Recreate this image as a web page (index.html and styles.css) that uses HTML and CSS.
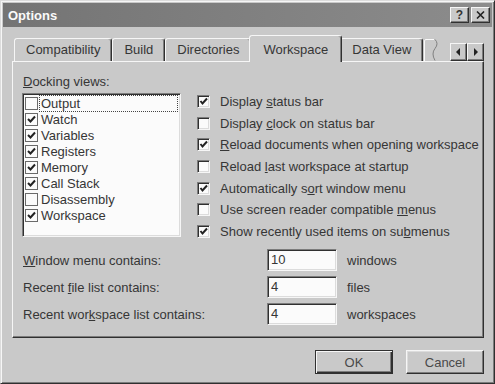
FILE: index.html
```html
<!DOCTYPE html>
<html lang="en">

<head>
  <meta charset="UTF-8">
  <title>Options</title>
  <link rel="stylesheet" href="styles.css">
</head>

<body>
  <div class="window">
    <div class="titlebar">
      <span class="title">Options</span>
      <div class="caption-btns">
        <span class="cap-btn help">?</span>
        <span class="cap-btn">
          <svg width="9" height="8" viewBox="0 0 9 8"><path d="M1 0.5 L8 7.5 M8 0.5 L1 7.5" stroke="#222" stroke-width="1.6"/></svg>
        </span>
      </div>
    </div>

    <div class="content">
      <div class="tabs">
        <div class="tab">Compatibility</div>
        <div class="tab">Build</div>
        <div class="tab">Directories</div>
        <div class="tab active">Workspace</div>
        <div class="tab">Data View</div>
        <svg class="tab-cut" width="18" height="23" viewBox="0 0 18 23">
          <path d="M1.5 23 V3 Q1.5 1.5 3 1.5 H11" stroke="#fafafa" stroke-width="1" fill="none"/>
          <path d="M12 1.5 q4 4 0 9 q-4 5 0 12" stroke="#808080" stroke-width="1" fill="none"/>
        </svg>
        <div class="tab-scroll">
          <span class="scroll-btn"><svg width="5" height="8" viewBox="0 0 5 8"><path d="M4 0 L0 4 L4 8 Z" fill="#222"/></svg></span>
          <span class="scroll-btn"><svg width="5" height="8" viewBox="0 0 5 8"><path d="M1 0 L5 4 L1 8 Z" fill="#222"/></svg></span>
        </div>
      </div>

      <div class="panel">
        <div class="top">
          <div class="docking">
            <div class="label"><u>D</u>ocking views:</div>
            <div class="listbox">
              <div class="item focus"><span class="lbox"></span><span class="item-text">Output</span></div>
              <div class="item"><span class="lbox checked"><svg width="11" height="11" viewBox="0 0 11 11"><polyline points="2,5 4.5,7.5 9,2.5" stroke="#222" stroke-width="2" fill="none"/></svg></span><span class="item-text">Watch</span></div>
              <div class="item"><span class="lbox checked"><svg width="11" height="11" viewBox="0 0 11 11"><polyline points="2,5 4.5,7.5 9,2.5" stroke="#222" stroke-width="2" fill="none"/></svg></span><span class="item-text">Variables</span></div>
              <div class="item"><span class="lbox checked"><svg width="11" height="11" viewBox="0 0 11 11"><polyline points="2,5 4.5,7.5 9,2.5" stroke="#222" stroke-width="2" fill="none"/></svg></span><span class="item-text">Registers</span></div>
              <div class="item"><span class="lbox checked"><svg width="11" height="11" viewBox="0 0 11 11"><polyline points="2,5 4.5,7.5 9,2.5" stroke="#222" stroke-width="2" fill="none"/></svg></span><span class="item-text">Memory</span></div>
              <div class="item"><span class="lbox checked"><svg width="11" height="11" viewBox="0 0 11 11"><polyline points="2,5 4.5,7.5 9,2.5" stroke="#222" stroke-width="2" fill="none"/></svg></span><span class="item-text">Call Stack</span></div>
              <div class="item"><span class="lbox"></span><span class="item-text">Disassembly</span></div>
              <div class="item"><span class="lbox checked"><svg width="11" height="11" viewBox="0 0 11 11"><polyline points="2,5 4.5,7.5 9,2.5" stroke="#222" stroke-width="2" fill="none"/></svg></span><span class="item-text">Workspace</span></div>
            </div>
          </div>

          <div class="options">
            <div class="option"><span class="check"><svg width="9" height="9" viewBox="0 0 9 9"><polyline points="1.5,4 3.5,6.5 8,1.5" stroke="#222" stroke-width="2" fill="none"/></svg></span><span>Display <u>s</u>tatus bar</span></div>
            <div class="option"><span class="check"></span><span>Display <u>c</u>lock on status bar</span></div>
            <div class="option"><span class="check"><svg width="9" height="9" viewBox="0 0 9 9"><polyline points="1.5,4 3.5,6.5 8,1.5" stroke="#222" stroke-width="2" fill="none"/></svg></span><span><u>R</u>eload documents when opening workspace</span></div>
            <div class="option"><span class="check"></span><span>Reload <u>l</u>ast workspace at startup</span></div>
            <div class="option"><span class="check"><svg width="9" height="9" viewBox="0 0 9 9"><polyline points="1.5,4 3.5,6.5 8,1.5" stroke="#222" stroke-width="2" fill="none"/></svg></span><span>Automatically s<u>o</u>rt window menu</span></div>
            <div class="option"><span class="check"></span><span>Use screen reader compatible <u>m</u>enus</span></div>
            <div class="option"><span class="check"><svg width="9" height="9" viewBox="0 0 9 9"><polyline points="1.5,4 3.5,6.5 8,1.5" stroke="#222" stroke-width="2" fill="none"/></svg></span><span>Show recently used items on su<u>b</u>menus</span></div>
          </div>
        </div>

        <div class="counts">
          <div class="count-row">
            <span class="count-label"><u>W</u>indow menu contains:</span>
            <span class="field">10</span>
            <span class="suffix">windows</span>
          </div>
          <div class="count-row">
            <span class="count-label">Recent <u>f</u>ile list contains:</span>
            <span class="field">4</span>
            <span class="suffix">files</span>
          </div>
          <div class="count-row">
            <span class="count-label">Recent wor<u>k</u>space list contains:</span>
            <span class="field">4</span>
            <span class="suffix">workspaces</span>
          </div>
        </div>
      </div>

      <div class="buttons">
        <button class="btn default">OK</button>
        <button class="btn">Cancel</button>
      </div>
    </div>
  </div>
</body>

</html>
```

FILE: styles.css
```css
body,
html {
  margin: 0;
  padding: 0;
  width: 100%;
  height: 100%;
  overflow: hidden;
  background-color: #c9c9c9;
  font-family: "Liberation Sans", Arial, sans-serif;
  font-size: 13px;
  color: #363636;
}

u {
  text-decoration-thickness: 1px;
  text-underline-offset: 1px;
}

.window {
  width: 495px;
  height: 384px;
  box-sizing: border-box;
  padding: 2px;
  background-color: #c9c9c9;
  border: 1px solid;
  border-color: #dcdcdc #303030 #303030 #dcdcdc;
  box-shadow: inset 1px 1px #f6f6f6, inset -1px -1px #7c7c7c;
}

/* caption */
.titlebar {
  height: 24px;
  display: flex;
  align-items: center;
  padding: 0 2px 0 5px;
  background: linear-gradient(90deg, #747474, #8c8c8c);
}

.title {
  color: #fafafa;
  font-weight: bold;
  font-size: 13px;
}

.caption-btns {
  margin-left: auto;
  display: flex;
  gap: 2px;
}

.cap-btn {
  width: 19px;
  height: 16px;
  box-sizing: border-box;
  display: flex;
  align-items: center;
  justify-content: center;
  background-color: #c9c9c9;
  border: 1px solid;
  border-color: #f6f6f6 #303030 #303030 #f6f6f6;
  box-shadow: inset -1px -1px #7c7c7c;
}

.cap-btn.help {
  font-weight: bold;
  font-size: 12px;
  color: #333;
}

.content {
  padding: 0 8px 0 9px;
}

/* tab strip */
.tabs {
  display: flex;
  align-items: flex-end;
  height: 26px;
  margin-top: 8px;
  padding-left: 2px;
}

.tab {
  height: 23px;
  box-sizing: border-box;
  padding: 0 11px;
  line-height: 21px;
  border: 1px solid;
  border-bottom: none;
  border-color: #f6f6f6 #303030 transparent #f6f6f6;
  border-radius: 3px 3px 0 0;
  box-shadow: inset -1px 0 #7c7c7c;
  background-color: #c9c9c9;
  white-space: nowrap;
}

.tab.active {
  position: relative;
  z-index: 2;
  height: 27px;
  margin: 0 -2px -1px;
  padding: 3px 13px 0;
}

.tab-cut {
  display: block;
  align-self: flex-end;
}

.tab-scroll {
  margin-left: auto;
  align-self: flex-start;
  margin-top: 8px;
  display: flex;
}

.scroll-btn {
  width: 17px;
  height: 18px;
  box-sizing: border-box;
  display: flex;
  align-items: center;
  justify-content: center;
  background-color: #c9c9c9;
  border: 1px solid;
  border-color: #f6f6f6 #303030 #303030 #f6f6f6;
  box-shadow: inset -1px -1px #7c7c7c;
}

/* tab page */
.panel {
  height: 277px;
  box-sizing: border-box;
  padding: 12px 0 0 9px;
  border: 1px solid;
  border-color: #f6f6f6 #303030 #303030 #f6f6f6;
  box-shadow: inset -1px -1px #7c7c7c;
}

.top {
  display: flex;
  gap: 16px;
}

.docking {
  width: 159px;
}

.label {
  height: 15px;
  line-height: 15px;
  padding-left: 1px;
  margin-bottom: 4px;
}

.listbox {
  height: 144px;
  box-sizing: border-box;
  padding: 1px;
  background-color: #fbfbfb;
  border: 1px solid;
  border-color: #7c7c7c #f6f6f6 #f6f6f6 #7c7c7c;
  box-shadow: inset 1px 1px #303030, inset -1px -1px #dcdcdc;
}

.item {
  display: flex;
  align-items: center;
  height: 16px;
  padding-left: 1px;
}

.lbox {
  width: 13px;
  height: 13px;
  box-sizing: border-box;
  display: flex;
  align-items: center;
  justify-content: center;
  border: 1px solid #6a6a6a;
  background-color: #fbfbfb;
}

.item-text {
  margin-left: 1px;
  padding: 0 1px;
  flex: 1;
  height: 15px;
  line-height: 15px;
  border: 1px solid transparent;
  margin-right: 1px;
}

.item.focus .item-text {
  border: 1px dotted #444;
}

.options {
  padding-top: 17px;
}

.option {
  height: 21.6px;
  display: flex;
  align-items: center;
  white-space: nowrap;
}

.check {
  width: 13px;
  height: 13px;
  box-sizing: border-box;
  margin-right: 10px;
  display: flex;
  align-items: center;
  justify-content: center;
  background-color: #fbfbfb;
  border: 1px solid;
  border-color: #7c7c7c #f6f6f6 #f6f6f6 #7c7c7c;
  box-shadow: inset 1px 1px #303030, inset -1px -1px #dcdcdc;
}

/* numeric fields */
.counts {
  margin-top: 7px;
  display: flex;
  flex-direction: column;
  gap: 5px;
}

.count-row {
  display: flex;
  align-items: center;
  height: 22px;
}

.count-label {
  width: 245px;
  padding-left: 1px;
  box-sizing: border-box;
}

.field {
  width: 70px;
  height: 22px;
  box-sizing: border-box;
  padding-left: 3px;
  line-height: 20px;
  background-color: #fbfbfb;
  border: 1px solid;
  border-color: #7c7c7c #f6f6f6 #f6f6f6 #7c7c7c;
  box-shadow: inset 1px 1px #303030, inset -1px -1px #dcdcdc;
}

.suffix {
  margin-left: 10px;
}

/* dialog buttons */
.buttons {
  display: flex;
  justify-content: flex-end;
  gap: 13px;
  margin-top: 12px;
}

.btn {
  width: 78px;
  height: 24px;
  padding: 0;
  font-family: "Liberation Sans", Arial, sans-serif;
  font-size: 13px;
  color: #4a4a4a;
  background-color: #c9c9c9;
  border: 1px solid;
  border-color: #f6f6f6 #303030 #303030 #f6f6f6;
  box-shadow: inset -1px -1px #7c7c7c, inset 1px 1px #dcdcdc;
}

.btn.default {
  border-color: #303030;
  box-shadow: inset 1px 1px #f6f6f6, inset -1px -1px #303030, inset -2px -2px #7c7c7c;
}
```
